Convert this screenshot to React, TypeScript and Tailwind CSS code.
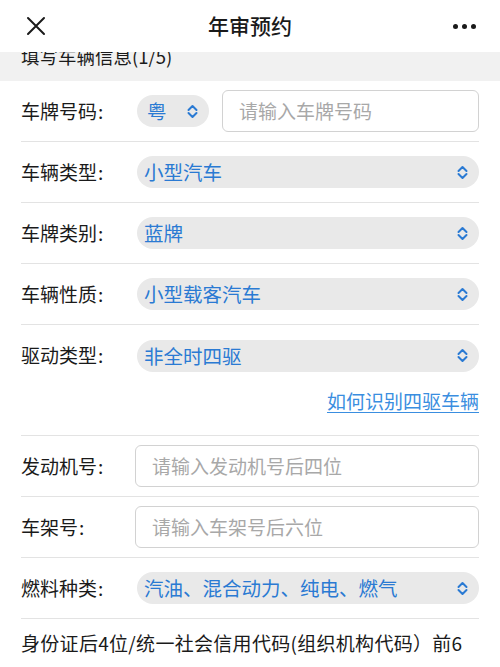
import React from "react";

const font = { fontFamily: '"Noto Sans CJK SC", "Noto Sans", sans-serif' };

function Chevron() {
  return (
    <svg width="11" height="15" viewBox="0 0 11 15" fill="none">
      <path d="M1.5 6 L5.5 2 L9.5 6" stroke="#2a7ad3" strokeWidth="2" strokeLinecap="round" strokeLinejoin="round" />
      <path d="M1.5 9 L5.5 13 L9.5 9" stroke="#2a7ad3" strokeWidth="2" strokeLinecap="round" strokeLinejoin="round" />
    </svg>
  );
}

function SelectPill({ value }: { value: string }) {
  return (
    <div className="flex-1 h-[32px] rounded-full bg-[#e9e9e9] flex items-center pl-[7px] pr-[11px] justify-between">
      <span className="text-[19.5px] text-[#2a7ad3] leading-none">{value}</span>
      <Chevron />
    </div>
  );
}

function Label({ text, w }: { text: string; w: string }) {
  return (
    <div className={`${w} shrink-0 text-[19px] text-[#1a1a1a]`}>
      {text}
      <span className="ml-[1px]">:</span>
    </div>
  );
}

function Row({ label, children, labelW = "w-[116px]" }: { label: string; children: React.ReactNode; labelW?: string }) {
  return (
    <div className="h-[61px] flex items-center border-b border-[#e3e3e3]">
      <Label text={label} w={labelW} />
      {children}
    </div>
  );
}

function Input({ placeholder }: { placeholder: string }) {
  return (
    <div className="flex-1 h-[42px] rounded-[6px] border border-[#d2d2d2] flex items-center pl-[16px] text-[19px] text-[#a8a8a8]">
      {placeholder}
    </div>
  );
}

export default function App() {
  return (
    <div className="w-[500px] h-[667px] bg-white overflow-hidden" style={font}>
      <div className="h-[52px] flex items-center justify-between px-[26px] relative">
        <svg width="20" height="20" viewBox="0 0 20 20">
          <path d="M2 2 L18 18 M18 2 L2 18" stroke="#1a1a1a" strokeWidth="2" strokeLinecap="round" />
        </svg>
        <div className="absolute left-0 right-0 text-center text-[21px] text-[#1a1a1a] font-medium pointer-events-none">年审预约</div>
        <div className="flex gap-[4px] items-center mr-[-2px]">
          <span className="w-[5px] h-[5px] rounded-full bg-[#1a1a1a]" />
          <span className="w-[5px] h-[5px] rounded-full bg-[#1a1a1a]" />
          <span className="w-[5px] h-[5px] rounded-full bg-[#1a1a1a]" />
        </div>
      </div>
      <div className="h-[29px] bg-[#f1f1f1] overflow-hidden px-[21px]">
        <div className="mt-[-9px] leading-[26px] text-[18.5px] text-[#1a1a1a]">填写车辆信息(1/5)</div>
      </div>
      <div className="mx-[21px]">
        <Row label="车牌号码">
          <div className="flex flex-1 gap-[13px] items-center">
            <div className="w-[72px] h-[32px] rounded-full bg-[#e9e9e9] flex items-center justify-between pl-[10px] pr-[11px]">
              <span className="text-[19.5px] text-[#2a7ad3] leading-none">粤</span>
              <Chevron />
            </div>
            <Input placeholder="请输入车牌号码" />
          </div>
        </Row>
        <Row label="车辆类型">
          <SelectPill value="小型汽车" />
        </Row>
        <Row label="车牌类别">
          <SelectPill value="蓝牌" />
        </Row>
        <Row label="车辆性质">
          <SelectPill value="小型载客汽车" />
        </Row>
        <div className="border-b border-[#e3e3e3]">
          <div className="h-[61px] flex items-center">
            <Label text="驱动类型" w="w-[116px]" />
            <SelectPill value="非全时四驱" />
          </div>
          <div className="h-[49px] pt-[3px] text-right">
            <span className="text-[19px] leading-[24px] text-[#3a8ee0] underline underline-offset-[3px]">如何识别四驱车辆</span>
          </div>
        </div>
        <Row label="发动机号" labelW="w-[114px]">
          <Input placeholder="请输入发动机号后四位" />
        </Row>
        <Row label="车架号" labelW="w-[114px]">
          <Input placeholder="请输入车架号后六位" />
        </Row>
        <Row label="燃料种类">
          <SelectPill value="汽油、混合动力、纯电、燃气" />
        </Row>
        <div className="pt-[10px] text-[19px] leading-[28px] tracking-[0.3px] text-[#1a1a1a] whitespace-nowrap">身份证后4位/统一社会信用代码(组织机构代码）前6</div>
      </div>
    </div>
  );
}
